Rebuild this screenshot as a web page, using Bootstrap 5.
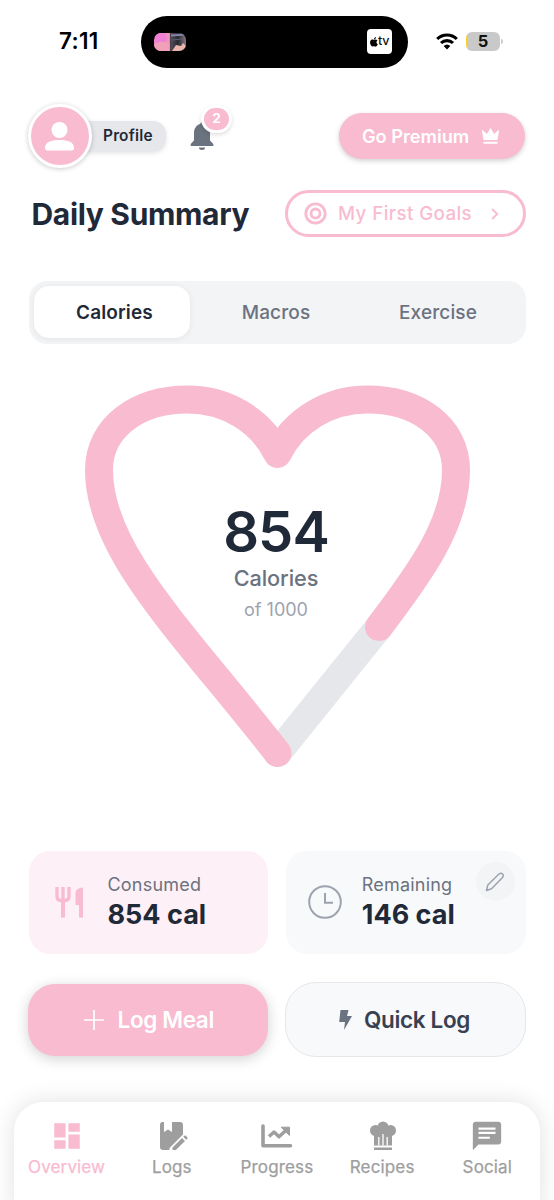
<!DOCTYPE html>
<html lang="en">
<head>
<meta charset="utf-8">
<meta name="viewport" content="width=device-width, initial-scale=1">
<title>Daily Summary</title>
<link href="https://cdn.jsdelivr.net/npm/bootstrap@5.3.0/dist/css/bootstrap.min.css" rel="stylesheet">
<style>
:root{--pink:#f8bbd0;--ink:#1f2937;--grey:#6b7280}
body{font-family:Inter,"Liberation Sans",sans-serif;color:var(--ink);background:#fff;width:554px;height:1200px;overflow:hidden;line-height:1}
svg{display:block;flex:none}
span,h1,div{white-space:nowrap}
.status{height:104px;padding:15.5px 52px 0 59px}
.status-items{height:52px}
.clock{font-size:22.5px;font-weight:600;color:#000;width:82px;letter-spacing:.3px;margin-top:-1px}
.island{width:267px;height:52px;background:#000;padding:0 16px 0 13px}
.art{width:32px;height:18px;border-radius:7px;background:linear-gradient(90deg,#f27fd0 0,#e99bb8 50%,#554b5b 53%,#252a31 75%,#8f7681 100%)}
.tvapp{width:25px;height:25px;border-radius:4px;background:#fff;color:#111;font-size:12.5px;font-weight:500;letter-spacing:-.4px}
.tvapp span{margin-top:-1px}
.wifi{margin-left:28px}
.battery{width:34px;height:19px;margin-left:8px;border-radius:6px;background:linear-gradient(90deg,#f9cf2d 0 2px,#c9c9c9 2px);color:#111;font-size:16.5px;font-weight:700}
.nub{width:2px;height:5px;background:#ccc;border-radius:0 2px 2px 0;margin-left:1px}
.top-row{height:64px;padding:0 29.5px 0 27.5px}
.avatar{width:64.5px;height:64.5px;border-radius:50%;background:var(--pink);border:3.5px solid #fff;box-shadow:0 1px 5px rgba(0,0,0,.22);z-index:1}
.profile{height:30px;width:89px;margin-left:-15px;padding:0 0 0 26px;background:#e5e7eb;border-radius:0 13px 13px 0;box-shadow:0 2px 5px rgba(0,0,0,.12);font-size:15.4px;font-weight:600;letter-spacing:.2px}
.alerts{position:relative;width:24px;height:30px;margin-left:23.5px}
.count{position:absolute;left:11.5px;top:-16.5px;width:31px;height:28px;border-radius:14px;border:3px solid #fff;background:var(--pink);color:#fff;font-size:13px;font-weight:700;box-shadow:0 2px 4px rgba(0,0,0,.13)}
.premium{width:185.5px;height:45.5px;border-radius:23px;background:var(--pink);color:#fff;font-size:18.2px;font-weight:600;box-shadow:0 2px 5px rgba(0,0,0,.18);padding:0 25px 0 23px}
.title-row{height:47px;margin-top:22px;padding:0 28.5px 0 31.5px}
.title-row h1{font-size:30px;font-weight:700;letter-spacing:-.33px;margin:0}
.goals{width:241px;height:47px;border:3px solid var(--pink);border-radius:24px;color:var(--pink);font-size:18.7px;font-weight:500;letter-spacing:.43px;padding:0 24px 0 16.5px}
.goals span{margin-left:11px;padding-top:1px}
.segments{margin:43.5px 28.5px 0;height:63px;border-radius:18px;background:#f3f4f6;padding:5.5px;font-size:19px;font-weight:500;letter-spacing:.12px;color:var(--grey)}
.segments>div{width:162px}
.segments>.on{width:156px;margin-right:5px;padding-left:5px;border-radius:15px;background:#fff;color:var(--ink);font-weight:600;box-shadow:0 1px 6px rgba(0,0,0,.07)}
.gauge{position:relative;height:400px;margin-top:26.5px}
.reading{position:absolute;top:137px;left:0;width:552px}
.total{font-size:56px;font-weight:600;letter-spacing:-.9px;line-height:50px}
.unit{font-size:21.7px;font-weight:500;letter-spacing:-.1px;color:var(--grey);line-height:24px;margin-top:9px}
.limit{font-size:18px;color:#9ca3af;line-height:20px;margin-top:9.5px}
.stats{margin:80.5px 28.5px 0;gap:17.5px}
.stat{position:relative;width:240px;height:103px;border-radius:21px;background:#fdf0f6}
.stat.plain{background:#f8f9fb}
.stat-info{margin-left:24px}
.plain .stat-info{margin-left:20px}
.fork{margin-left:26px}
.dial{margin-left:22px}
.stat-name{font-size:18px;color:var(--grey);line-height:20px;letter-spacing:.2px;padding-top:1px}
.stat-value{font-size:27px;font-weight:700;letter-spacing:0;line-height:32px;margin-top:4px}
.edit{position:absolute;right:11px;top:11.5px;width:39px;height:39px;border-radius:50%;background:#f3f4f6}
.actions{margin:28.5px 28px 0;gap:17.5px;font-size:22.5px;font-weight:600;letter-spacing:-.35px}
.actions span{padding-top:1px}
.log-meal{width:239.5px;height:72px;border-radius:27px;background:var(--pink);color:#fff;gap:14px;padding-left:2px;box-shadow:0 3px 14px rgba(0,0,0,.18)}
.quick{width:241px;height:75px;border-radius:31px;border:1.5px solid #e5e7eb;background:#f8f9fb;color:#374151;gap:12px;padding-right:2px}
.tabbar{margin:44.5px 14px 0 14px;height:110px;border-radius:29px 29px 0 0;background:#fff;box-shadow:0 0 24px rgba(0,0,0,.12);padding:17px 0 0 0;color:#9e9e9e;font-size:17px;font-weight:400;letter-spacing:.15px}
.tabbar>div{width:20%}
.tabbar>.current{color:var(--pink)}
.tabbar span{margin-top:4px;line-height:20px;-webkit-text-stroke:.25px currentColor}
</style>
</head>
<body>
<div class="status d-flex align-items-start">
  <div class="status-items d-flex align-items-center">
    <span class="clock">7:11</span>
    <div class="island d-flex align-items-center justify-content-between rounded-pill">
      <div class="art overflow-hidden"><svg width="32" height="18"><circle cx="7" cy="5" r="6" fill="#f07fd6"/><path d="M0 11q8-5 16 0v7H0z" fill="#f0a0b8"/><path d="M16.500 0v18" stroke="#4a4050" stroke-width="1.200"/><path d="M17 2.500l14-1" stroke="#8584a8" stroke-width="2"/><path d="M18 7l10-1" stroke="#5d6069" stroke-width="1"/><path d="M18 18l4-6 5 1 2-3 3 3v5z" fill="#e9b5ad"/></svg></div>
      <div class="tvapp d-flex align-items-center justify-content-center"><svg width="8" height="10" viewBox="0 0 16 20" fill="#000"><path d="M8 6c2-1.500 5-1.500 7 .8-3 2-2.500 6 .7 7.500C14 18 12 20 10 19c-1.500-.7-2.500-.7-4 0C3 20-1 13 .4 9 1.500 5 5 4.300 8 6zM8 5c0-3 2-5 4-5 0 3-2 5-4 5z"/></svg><span>tv</span></div>
    </div>
    <svg class="wifi" width="22" height="17" viewBox="0 0 22 17" fill="none" stroke="#000" stroke-width="3.100"><path d="M1.200 6a14 14 0 0 1 19.600 0"/><path d="M5 10a8.700 8.700 0 0 1 12 0"/><path d="M7.600 13.100a5 5 0 0 1 6.800 0L11 16.600z" fill="#000" stroke="none"/></svg>
    <div class="battery d-flex align-items-center justify-content-center">5</div><div class="nub"></div>
  </div>
</div>

<div class="top-row d-flex align-items-center">
  <div class="avatar d-flex align-items-center justify-content-center position-relative"><svg width="29" height="29" viewBox="0 0 29 29" fill="#fff"><circle cx="14.500" cy="8" r="8"/><path d="M0 26c0-6 6-8 14.500-8S29 20 29 26q0 2.500-2.500 2.500h-24Q0 28.500 0 26z"/></svg></div>
  <div class="profile d-flex align-items-center">Profile</div>
  <div class="alerts"><svg width="24" height="30" viewBox="0 0 24 30" fill="#6b7280"><path d="M12 1q1.500 0 1.800 2C18 4 20 8 20 12v7.500l3.300 3.500V25H.7v-2L4 19.500V12c0-4 2-8 6.200-9Q10.500 1 12 1zM9 26.500h6a3 2.500 0 0 1-6 0z"/></svg><div class="count d-flex align-items-center justify-content-center">2</div></div>
  <div class="premium d-flex align-items-center justify-content-between ms-auto"><span>Go Premium</span><svg width="19" height="17" viewBox="0 0 19 17" fill="#fff"><path d="M2.500 12L.8 1.500l5 4.500L9.500 0l3.700 6 5-4.500L16.500 12zM2.500 13.800h14v2h-14z"/></svg></div>
</div>

<div class="title-row d-flex align-items-center justify-content-between">
  <h1>Daily Summary</h1>
  <div class="goals d-flex align-items-center"><svg width="23" height="23" viewBox="0 0 23 23" fill="none" stroke="#f8bbd0" stroke-width="2.800"><circle cx="11.500" cy="11.500" r="9.700"/><circle cx="11.500" cy="11.500" r="4.500"/></svg><span>My First Goals</span><svg class="ms-auto" width="8" height="12" viewBox="0 0 8 12" fill="none" stroke="#f8bbd0" stroke-width="1.800"><path d="M1.200 1l5 5-5 5"/></svg></div>
</div>

<div class="segments d-flex">
  <div class="on d-flex align-items-center justify-content-center">Calories</div>
  <div class="d-flex align-items-center justify-content-center">Macros</div>
  <div class="d-flex align-items-center justify-content-center">Exercise</div>
</div>

<div class="gauge">
  <svg width="554" height="400" viewBox="0 370 554 400" fill="none" stroke-width="28" stroke-linecap="round" stroke-linejoin="round">
    <path d="M277.500 753L379 627" stroke="#e5e7eb"/>
    <path d="M277.500 753C185 634 99 553 99 470C99 427 138 399.500 187.500 399.500C226 399.500 261 420 277.500 454C294 420 329 399.500 367.500 399.500C417 399.500 456 427 456 470C456 524 420 573 379 627" stroke="#f8bbd0"/>
  </svg>
  <div class="reading text-center"><div class="total">854</div><div class="unit">Calories</div><div class="limit">of 1000</div></div>
</div>

<div class="stats d-flex">
  <div class="stat d-flex align-items-center">
    <svg class="fork" width="29" height="31" viewBox="0 0 29 31" fill="none" stroke="#f8bbd0" stroke-width="3.300"><path d="M2 0v9.500q0 4 4 4h4q4 0 4-4V0M8 0v13"/><path d="M8 12v18.500" stroke-width="4"/><path d="M20.500 18V6q0-5 7.500-5.500V30.500h-4V18z" fill="#f8bbd0" stroke="none"/></svg>
    <div class="stat-info"><div class="stat-name">Consumed</div><div class="stat-value">854 cal</div></div>
  </div>
  <div class="stat plain d-flex align-items-center">
    <svg class="dial" width="34" height="34" viewBox="0 0 34 34" fill="none" stroke="#9ca3af" stroke-width="2"><circle cx="17" cy="17" r="15.800"/><path d="M17 8v9.800h8"/></svg>
    <div class="stat-info"><div class="stat-name">Remaining</div><div class="stat-value">146 cal</div></div>
    <div class="edit d-flex align-items-center justify-content-center"><svg width="20" height="20" viewBox="0 0 20 20" fill="none" stroke="#9ca3af" stroke-width="1.500" stroke-linejoin="round"><path d="M1.500 18.500l1.300-5.500L14 2q2-1.500 3.500 0t0 3.500L6.500 16.800z"/></svg></div>
  </div>
</div>

<div class="actions d-flex align-items-center">
  <div class="log-meal d-flex align-items-center justify-content-center"><svg width="20" height="20" viewBox="0 0 20 20" stroke="#fff" stroke-width="1.700"><path d="M10 0v20M0 10h20"/></svg><span>Log Meal</span></div>
  <div class="quick d-flex align-items-center justify-content-center"><svg width="13" height="20" viewBox="0 0 13 20" fill="#6b7280"><path d="M1.500 0h8L8 6h5L5 20l1-8H.2z"/></svg><span>Quick Log</span></div>
</div>

<div class="tabbar d-flex">
  <div class="current d-flex flex-column align-items-center"><svg width="34" height="34" viewBox="0 0 24 24" fill="currentColor"><path d="M3 13h8V3H3v10zm0 8h8v-6H3v6zm10 0h8V11h-8v10zm0-18v6h8V3h-8z"/></svg><span>Overview</span></div>
  <div class="d-flex flex-column align-items-center"><svg width="34" height="34" viewBox="-2 0 34 34" fill="currentColor"><path d="M5.500 3H7v10l4-2.500 4 2.500V3h8q3 0 3 3v9.500L12.500 29v2H6Q3 31 3 28V6Q3 3 5.500 3zM15.500 31v-2.600L25 19l3 3-9.200 9zM26.200 17.800l1.100-1q.8-.6 1.500 0l1.500 1.500q.6.800 0 1.500l-1.100 1z"/></svg><span>Logs</span></div>
  <div class="d-flex flex-column align-items-center"><svg width="34" height="34" viewBox="0 0 34 34" fill="none" stroke="currentColor" stroke-linecap="round" stroke-linejoin="round"><path d="M3 7v19.800h27.500" stroke-width="3.600"/><path d="M9 17.500l5-4.500 5 4.800 6.500-6" stroke-width="3.400" stroke-linecap="butt"/><path d="M21.500 8.200h8v8z" fill="currentColor" stroke-width="1"/></svg><span>Progress</span></div>
  <div class="d-flex flex-column align-items-center"><svg width="34" height="34" viewBox="-1 0 34 34"><g fill="currentColor"><circle cx="9.500" cy="11.500" r="5.500"/><circle cx="24.500" cy="11.500" r="5.500"/><circle cx="17" cy="8" r="5.500"/><path d="M8 11h18v15.500H8zM8 28.500h18V31H8z"/></g><path d="M12.800 18v8.500M17 15v11.500M21.200 18v8.500" stroke="#fff" stroke-width="1.300"/></svg><span>Recipes</span></div>
  <div class="d-flex flex-column align-items-center"><svg width="34" height="34" viewBox="0 0 24 24" fill="currentColor"><path d="M20 2H4c-1.100 0-2 .9-2 2v18l4-4h14c1.100 0 2-.9 2-2V4c0-1.100-.9-2-2-2zM6 9h12v1.500H6V9zm8 5H6v-1.500h8V14zm4-6.500H6V6h12v1.500z"/></svg><span>Social</span></div>
</div>
<script src="https://cdn.jsdelivr.net/npm/bootstrap@5.3.0/dist/js/bootstrap.bundle.min.js"></script>
</body>
</html>
